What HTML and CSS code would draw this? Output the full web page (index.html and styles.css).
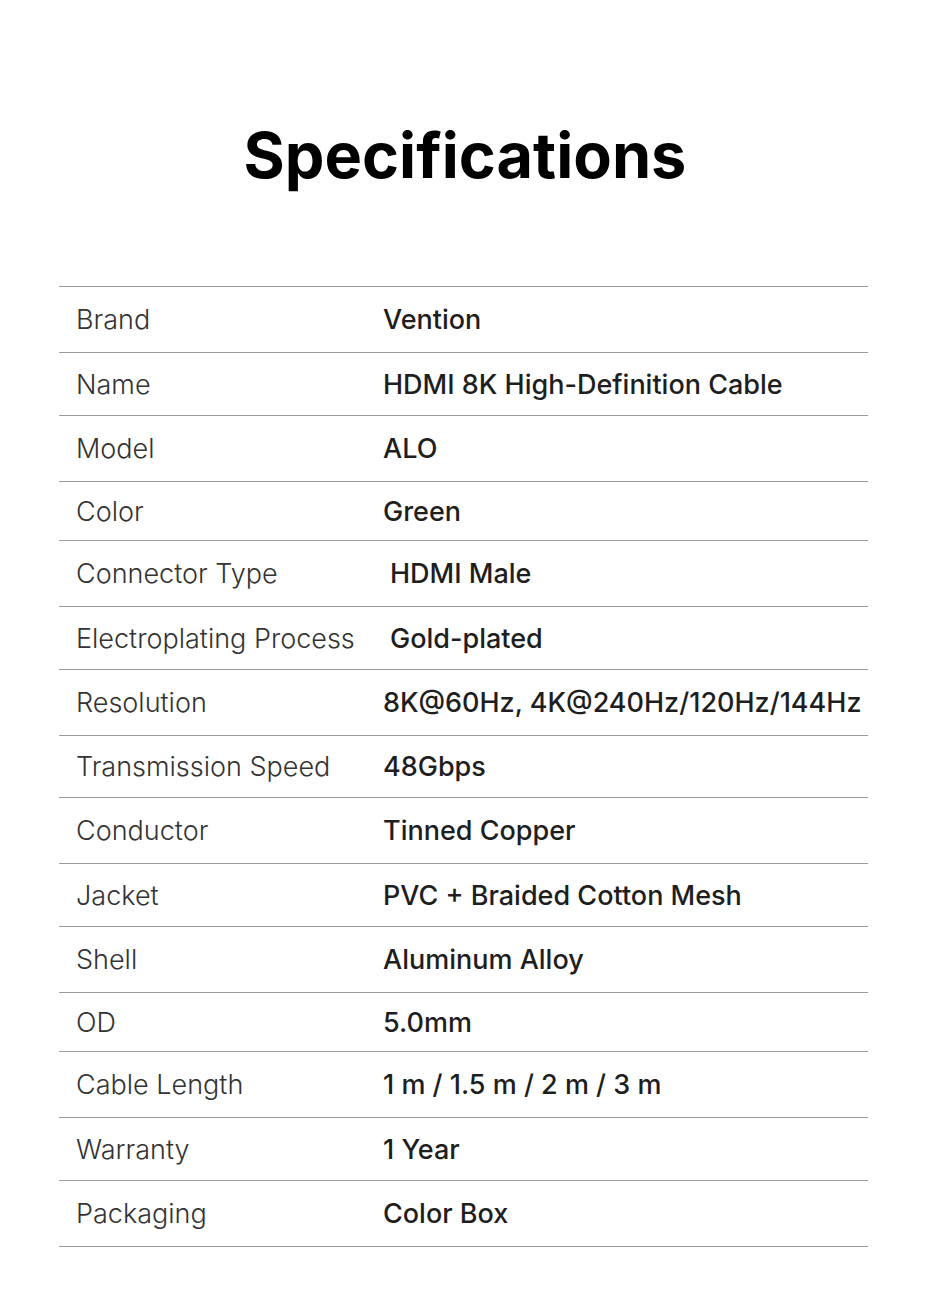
FILE: index.html
```html
<!DOCTYPE html>
<html>
<head>
<meta charset="utf-8">
<link rel="stylesheet" href="styles.css">
</head>
<body>
<h1 class="title">Specifications</h1>
<div class="spec">
  <div class="row h66"><span class="label">Brand</span><span class="value">Vention</span></div>
  <div class="row h63"><span class="label">Name</span><span class="value">HDMI 8K High-Definition Cable</span></div>
  <div class="row h66"><span class="label">Model</span><span class="value">ALO</span></div>
  <div class="row h59"><span class="label">Color</span><span class="value">Green</span></div>
  <div class="row h66"><span class="label">Connector Type</span><span class="value shift">HDMI Male</span></div>
  <div class="row h63"><span class="label">Electroplating Process</span><span class="value shift">Gold-plated</span></div>
  <div class="row h66"><span class="label">Resolution</span><span class="value">8K@60Hz, 4K@240Hz/120Hz/144Hz</span></div>
  <div class="row h62"><span class="label">Transmission Speed</span><span class="value">48Gbps</span></div>
  <div class="row h66"><span class="label">Conductor</span><span class="value">Tinned Copper</span></div>
  <div class="row h63"><span class="label">Jacket</span><span class="value">PVC + Braided Cotton Mesh</span></div>
  <div class="row h66"><span class="label">Shell</span><span class="value">Aluminum Alloy</span></div>
  <div class="row h59"><span class="label">OD</span><span class="value">5.0mm</span></div>
  <div class="row h66"><span class="label">Cable Length</span><span class="value">1 m / 1.5 m / 2 m / 3 m</span></div>
  <div class="row h63"><span class="label">Warranty</span><span class="value">1 Year</span></div>
  <div class="row h66"><span class="label">Packaging</span><span class="value">Color Box</span></div>
</div>
</body>
</html>
```
FILE: styles.css
```css
html, body {
  margin: 0;
  padding: 0;
  background: #ffffff;
}
body {
  width: 930px;
  font-family: "Inter", "Noto Sans", sans-serif;
  color: #222;
}
.title {
  margin: 0;
  padding-top: 111px;
  height: 286px;
  box-sizing: border-box;
  text-align: center;
  font-size: 63px;
  font-weight: 700;
  line-height: 88px;
  color: #000;
}
.spec {
  margin: 0 62px 0 59px;
  border-top: 1.5px solid #9a9a9a;
}
.row {
  display: flex;
  align-items: center;
  border-bottom: 1.5px solid #9a9a9a;
  box-sizing: border-box;
}
.h66 { height: 66px; }
.h63 { height: 63px; }
.h62 { height: 62px; }
.h59 { height: 59px; }
.label {
  width: 307px;
  padding-left: 17px;
  font-size: 27px;
  font-weight: 300;
  color: #333;
  flex: none;
}
.value {
  font-size: 27px;
  font-weight: 500;
  color: #1e1e1e;
}
.shift { padding-left: 7px; }
```
